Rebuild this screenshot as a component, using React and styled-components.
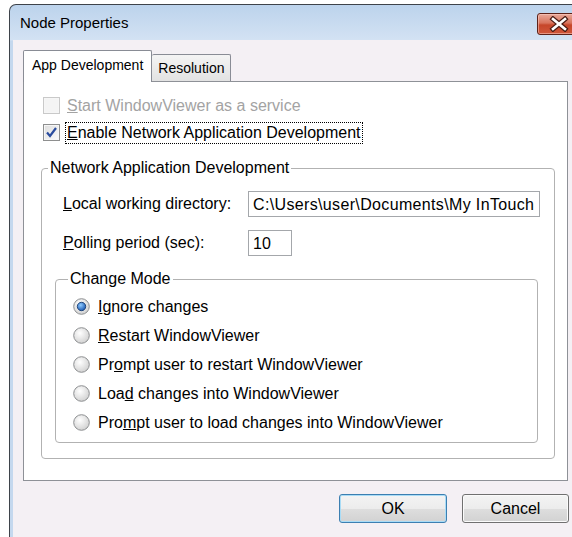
import styled, { createGlobalStyle } from 'styled-components';

const GlobalStyle = createGlobalStyle`
  html, body {
    margin: 0;
    background: #fff;
    overflow: hidden;
  }
  body {
    font-family: "Liberation Sans", Arial, sans-serif;
    font-size: 16px;
    line-height: 18px;
    color: #000;
  }
`;

const modes = [
  { key: 'I', rest: 'gnore changes', checked: true },
  { pre: '', key: 'R', rest: 'estart WindowViewer' },
  { pre: 'Pr', key: 'o', rest: 'mpt user to restart WindowViewer' },
  { pre: 'Loa', key: 'd', rest: ' changes into WindowViewer' },
  { pre: 'Pro', key: 'm', rest: 'pt user to load changes into WindowViewer' },
];

const CheckBox = ({ checked, disabled }) => (
  <Box $disabled={disabled}>
    {checked && (
      <svg width="15" height="15" viewBox="0 0 15 15">
        <path d="M3 7.5 L6 11 L12 3" fill="none" stroke="#2a4c9e" strokeWidth="2.2" />
      </svg>
    )}
  </Box>
);

const Radio = ({ checked }) => (
  <svg width="17" height="17" viewBox="0 0 17 17">
    <defs>
      <radialGradient id="radioFace" cx="40%" cy="35%" r="70%">
        <stop offset="0%" stopColor="#ffffff" />
        <stop offset="100%" stopColor="#cfcfcf" />
      </radialGradient>
      <radialGradient id="radioDot" cx="40%" cy="35%" r="70%">
        <stop offset="0%" stopColor="#8fcbff" />
        <stop offset="100%" stopColor="#1552ad" />
      </radialGradient>
    </defs>
    <circle cx="8.5" cy="8.5" r="7.8" fill="url(#radioFace)" stroke="#8d8f91" />
    {checked && <circle cx="8.5" cy="8.5" r="4.2" fill="url(#radioDot)" stroke="#173c70" strokeWidth="0.9" />}
  </svg>
);

const App = () => {
  return (
    <>
      <GlobalStyle />
      <Window>
        <TitleBar>
          <Title>Node Properties</Title>
          <CloseButton>
            <svg width="20" height="16" viewBox="0 0 20 16">
              <path d="M4 3 L16 13 M16 3 L4 13" stroke="#4a1c14" strokeWidth="5" strokeLinecap="square" />
              <path d="M4 3 L16 13 M16 3 L4 13" stroke="#fff" strokeWidth="2.6" strokeLinecap="square" />
            </svg>
          </CloseButton>
        </TitleBar>
        <Client>
          <TabStrip>
            <Tab $active>App Development</Tab>
            <Tab>Resolution</Tab>
          </TabStrip>
          <Panel>
            <CheckRow $disabled>
              <CheckBox disabled />
              <span><u>S</u>tart WindowViewer as a service</span>
            </CheckRow>
            <CheckRow>
              <CheckBox checked />
              <Focused><u>E</u>nable Network Application Development</Focused>
            </CheckRow>
            <Group>
              <Legend $indent={6}>Network Application Development</Legend>
              <GroupBody>
                <FieldGrid>
                  <Label><u>L</u>ocal working directory:</Label>
                  <TextBox $wide>C:\Users\user\Documents\My InTouch</TextBox>
                  <Label><u>P</u>olling period (sec):</Label>
                  <TextBox>10</TextBox>
                </FieldGrid>
                <ModeGroup>
                  <Legend $indent={12}>Change Mode</Legend>
                  <ModeList>
                    {modes.map((m, i) => (
                      <RadioRow key={i}>
                        <Radio checked={m.checked} />
                        <span>{m.pre}<u>{m.key}</u>{m.rest}</span>
                      </RadioRow>
                    ))}
                  </ModeList>
                </ModeGroup>
              </GroupBody>
            </Group>
          </Panel>
          <ButtonRow>
            <Button $default $width={108}>OK</Button>
            <Button $width={107}>Cancel</Button>
          </ButtonRow>
        </Client>
      </Window>
    </>
  );
};

export default App;

const Window = styled.div`
  box-sizing: border-box;
  display: flex;
  flex-direction: column;
  width: 573px;
  height: 533px;
  margin: 4px 0 0 9px;
  border: 1px solid #3e434a;
  border-bottom: none;
  border-radius: 7px 7px 0 0;
  background: linear-gradient(#bcd3ec, #d3e2f3 35px, #c4d8ee 36px);
  overflow: hidden;
`;

const TitleBar = styled.div`
  display: flex;
  justify-content: space-between;
  align-items: flex-start;
  flex: none;
  height: 35px;
  padding-left: 10px;
`;

const Title = styled.div`
  margin-top: 9px;
  font-size: 15px;
  color: #000;
`;

const CloseButton = styled.div`
  box-sizing: border-box;
  display: flex;
  align-items: center;
  justify-content: center;
  width: 44px;
  height: 22px;
  margin-top: 8px;
  border: 1px solid #5d2219;
  border-radius: 3px;
  background: linear-gradient(#e9a99a, #d8735c 45%, #c6462a 55%, #d0573b);
  box-shadow: inset 0 0 0 1px rgba(255, 210, 200, 0.5);
`;

const Client = styled.div`
  flex: 1;
  margin: 0 3px;
  padding: 10px 10px 0;
  background: #f4f0f4;
`;

const TabStrip = styled.div`
  display: flex;
  align-items: flex-end;
  height: 31px;
  position: relative;
  z-index: 1;
`;

const Tab = styled.div`
  box-sizing: border-box;
  font-size: 14px;
  line-height: 16px;
  border: 1px solid #898c95;
  border-bottom: none;
  border-radius: 2px 2px 0 0;
  height: ${p => (p.$active ? '32px' : '27px')};
  margin-bottom: ${p => (p.$active ? '-1px' : '0')};
  padding: ${p => (p.$active ? '6px 8px 0' : '5px 6px 0')};
  border-left: ${p => (p.$active ? '1px solid #898c95' : 'none')};
  background: ${p => (p.$active ? '#fff' : 'linear-gradient(#f4f4f4, #e2e2e2)')};
`;

const Panel = styled.div`
  box-sizing: border-box;
  background: #fff;
  border: 1px solid #8e9197;
  padding: 10px 12px 21px 17px;
`;

const CheckRow = styled.div`
  display: flex;
  align-items: center;
  gap: 7px;
  height: 27px;
  padding-left: 2px;
  color: ${p => (p.$disabled ? '#a3a3a3' : '#000')};
`;

const Box = styled.div`
  box-sizing: border-box;
  display: flex;
  align-items: center;
  justify-content: center;
  width: 17px;
  height: 17px;
  border: 1px solid ${p => (p.$disabled ? '#c9c9c9' : '#8e8f8f')};
  background: ${p => (p.$disabled ? '#f4f4f4' : 'linear-gradient(135deg, #dedede, #fbfbfb)')};
  box-shadow: inset 0 0 0 1px #f6f6f6;
`;

const Focused = styled.span`
  outline: 1px dotted #000;
  outline-offset: 1px;
`;

const Group = styled.fieldset`
  margin: 13px 0 0;
  padding: 0;
  min-width: 0;
  border: 1px solid #b2b2b2;
  border-radius: 4px;
`;

const Legend = styled.legend`
  margin-left: ${p => p.$indent}px;
  padding: 0 2px;
  line-height: 18px;
`;

const GroupBody = styled.div`
  padding: 14px 15px 15px 13px;
`;

const FieldGrid = styled.div`
  display: grid;
  grid-template-columns: 185px 1fr;
  row-gap: 13px;
  align-items: center;
  padding-left: 8px;
`;

const Label = styled.div`
  line-height: 18px;
`;

const TextBox = styled.div`
  box-sizing: border-box;
  height: 26px;
  width: ${p => (p.$wide ? 'calc(100% + 1px)' : '44px')};
  padding: 4px 0 0 4px;
  border: 1px solid #a4a7ab;
  background: #fff;
  letter-spacing: ${p => (p.$wide ? '0.35px' : '0')};
  white-space: nowrap;
  overflow: hidden;
`;

const ModeGroup = styled(Group)`
  margin: 14px 1px 0 0;
`;

const ModeList = styled.div`
  padding: 4px 0 5px 17px;
`;

const RadioRow = styled.div`
  display: flex;
  align-items: center;
  gap: 8px;
  height: 29px;
`;

const ButtonRow = styled.div`
  display: flex;
  justify-content: flex-end;
  gap: 15px;
  margin: 13px -1px 0 0;
`;

const Button = styled.div`
  box-sizing: border-box;
  display: flex;
  align-items: center;
  justify-content: center;
  width: ${p => p.$width}px;
  height: 29px;
  border: 1px solid ${p => (p.$default ? '#3c7fb1' : '#707070')};
  border-radius: 3px;
  background: linear-gradient(#f4f4f4, #ececec 50%, #dedede 51%, #d2d2d2);
  box-shadow: inset 0 0 0 1px ${p => (p.$default ? '#a9dcf6' : '#fbfbfb')};
`;
